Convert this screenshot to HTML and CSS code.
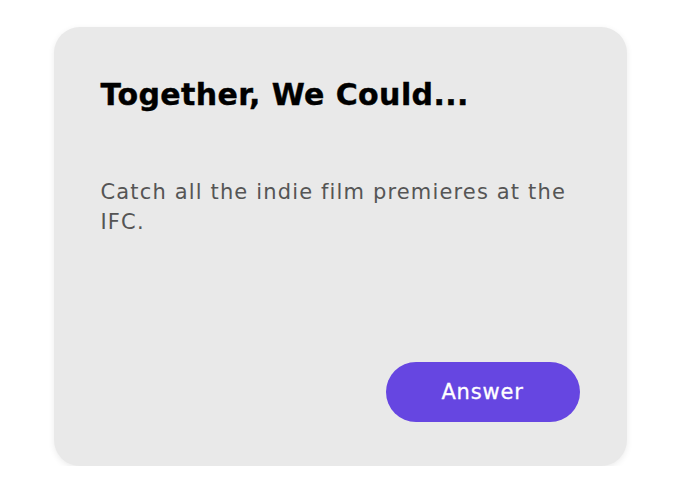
FILE: index.html
```html
<!DOCTYPE html>
<html lang="en">
<head>
  <meta charset="UTF-8">
  <title>Together, We Could</title>
  <link rel="stylesheet" href="styles.css">
</head>
<body>

  <div class="prompt-card">
    <h2 class="prompt-title">Together, We Could...</h2>
    <p class="prompt-text">Catch all the indie film premieres at the IFC.</p>
    <div class="prompt-actions">
      <button type="button" class="answer-btn">Answer</button>
    </div>
  </div>

</body>
</html>
```

FILE: styles.css
```css
body {
  margin: 0;
  padding: 27px 0 0;
  background: #fff;
  font-family: "DejaVu Sans", Arial, sans-serif;
}

.prompt-card {
  box-sizing: border-box;
  width: 573px;
  height: 439px;
  margin: 0 auto;
  padding: 47px 47px 44px;
  background: #e9e9e9;
  border-radius: 26px;
  box-shadow: 0 2px 6px rgba(0, 0, 0, 0.08);
  display: flex;
  flex-direction: column;
}

.prompt-title {
  margin: 0;
  font-size: 30px;
  line-height: 42px;
  font-weight: 700;
  color: #000;
  letter-spacing: 0.4px;
  -webkit-text-stroke: 0.4px #000;
}

.prompt-text {
  margin: 61px 0 0;
  font-size: 21px;
  line-height: 30px;
  color: #555;
  letter-spacing: 1.15px;
}

.prompt-actions {
  margin-top: auto;
  display: flex;
  justify-content: flex-end;
}

.answer-btn {
  width: 194px;
  height: 60px;
  border: none;
  border-radius: 30px;
  background: #6646e1;
  color: #fff;
  font-family: inherit;
  font-size: 21px;
  font-weight: 400;
  letter-spacing: 0.8px;
  -webkit-text-stroke: 0.3px #fff;
  cursor: pointer;
}
```
